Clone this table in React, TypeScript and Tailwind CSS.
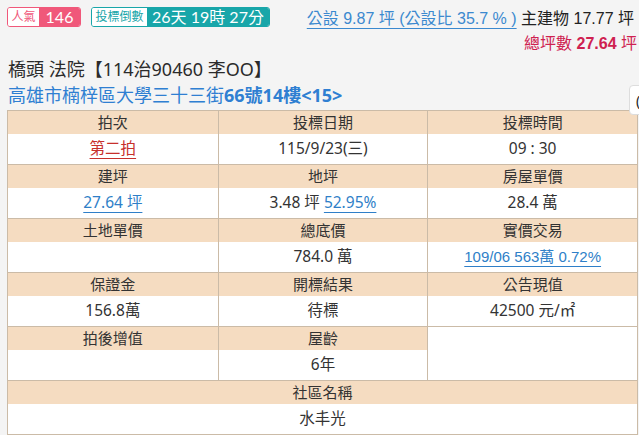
import React from "react";

const cjk = "font-['Noto_Sans','Noto_Sans_CJK_TC',sans-serif]";
const arial = "font-['Liberation_Sans','Noto_Sans_CJK_TC',sans-serif]";
const lato = "font-['Lato','Noto_Sans_CJK_TC',sans-serif]";

type Cell = { label: string; value?: React.ReactNode };

const groups: Cell[][] = [
  [
    { label: "拍次", value: <a className="text-[#c7302c] underline underline-offset-4 decoration-1">第二拍</a> },
    { label: "投標日期", value: "115/9/23(三)" },
    { label: "投標時間", value: "09 : 30" },
  ],
  [
    { label: "建坪", value: <a className="text-[#2f7fc8] underline underline-offset-4 decoration-1">27.64 坪</a> },
    {
      label: "地坪",
      value: (
        <span>
          3.48 坪 <a className="text-[#2f7fc8] underline underline-offset-4 decoration-1">52.95%</a>
        </span>
      ),
    },
    { label: "房屋單價", value: "28.4 萬" },
  ],
  [
    { label: "土地單價", value: "" },
    { label: "總底價", value: "784.0 萬" },
    {
      label: "實價交易",
      value: (
        <a className={`${arial} text-[#2f7fc8] underline underline-offset-4 decoration-1 text-[15px]`}>
          109/06 563萬 0.72%
        </a>
      ),
    },
  ],
  [
    { label: "保證金", value: "156.8萬" },
    { label: "開標結果", value: "待標" },
    { label: "公告現值", value: "42500 元/㎡" },
  ],
];

const Column = ({ cell, first }: { cell: Cell; first?: boolean }) => (
  <div className={`flex flex-col ${first ? "" : "border-l border-[#cbbba7]"}`}>
    <div className="h-[23px] bg-[#f5dcc1] flex items-center justify-center">{cell.label}</div>
    <div className="h-[30px] bg-white flex items-center justify-center text-[15.5px]">{cell.value}</div>
  </div>
);

export default function App() {
  return (
    <div className={`relative w-[639px] h-[435px] overflow-hidden bg-[#f4f4f4] text-[#333] ${cjk}`}>
      {/* top bar */}
      <div className="flex justify-between pl-[7px] pt-[7px]">
        <div className="flex gap-[10px] h-[20px]">
          <div className="flex rounded-[3px] overflow-hidden border border-[#f0587a]">
            <span className="w-[31px] bg-white text-[#f0587a] text-[12px] flex items-center justify-center">人氣</span>
            <span className={`${lato} w-[41px] bg-[#f0587a] text-white text-[16px] flex items-center justify-center`}>146</span>
          </div>
          <div className="flex rounded-[3px] overflow-hidden border border-[#18a6a9]">
            <span className="w-[55px] bg-white text-[#18a6a9] text-[12px] flex items-center justify-center">投標倒數</span>
            <span className={`${lato} w-[122px] bg-[#18a6a9] text-white text-[16px] flex items-center justify-center`}>
              26天 19時 27分
            </span>
          </div>
        </div>
        <div className={`flex flex-col items-end pt-[2px] ${arial} text-[16px] leading-[20px]`}>
          <div className="whitespace-nowrap mr-[5px]">
            <a className="text-[#3b89cf] underline underline-offset-[4px] decoration-1">公設 9.87 坪 (公設比 35.7 % )</a>{" "}
            <span className="text-[#222]">主建物 17.77 坪</span>
          </div>
          <div className="text-[#cf2150] mt-[5px] mr-[2px] whitespace-nowrap">
            總坪數 <b>27.64</b> 坪
          </div>
        </div>
      </div>

      <div className="pl-[8px] mt-[2px] text-[18px] leading-[26px] text-[#2b2b2b]">橋頭 法院【114治90460 李OO】</div>
      <div className="pl-[8px] text-[18px] leading-[26px] text-[#2f7fd2]">
        高雄市楠梓區大學三十三街<span className="font-bold">66號14樓&lt;15&gt;</span>
      </div>

      {/* side button peeking in */}
      <div className="absolute left-[629px] top-[85px] w-[30px] h-[30px] rounded-[4px] bg-white border border-[#ddd] flex items-center pl-[6px] text-[#222] text-[14px]">
        (
      </div>

      {/* info table */}
      <div className="ml-[7px] mt-[2px] w-[631px] border border-[#cbbba7] text-[15px]">
        {groups.map((g, i) => (
          <div key={i} className={`grid grid-cols-3 ${i ? "border-t border-[#cbbba7]" : ""}`}>
            {g.map((c, j) => (
              <Column key={c.label} cell={c} first={j === 0} />
            ))}
          </div>
        ))}
        <div className="grid grid-cols-3 border-t border-[#cbbba7]">
          <Column cell={{ label: "拍後增值", value: "" }} first />
          <Column cell={{ label: "屋齡", value: "6年" }} />
          <div className="border-l border-[#cbbba7] bg-white" />
        </div>
        <div className="border-t border-[#cbbba7]">
          <div className="h-[23px] bg-[#f5dcc1] flex items-center justify-center">社區名稱</div>
          <div className="h-[30px] bg-white flex items-center justify-center text-[15.5px]">水丰光</div>
        </div>
      </div>
    </div>
  );
}
